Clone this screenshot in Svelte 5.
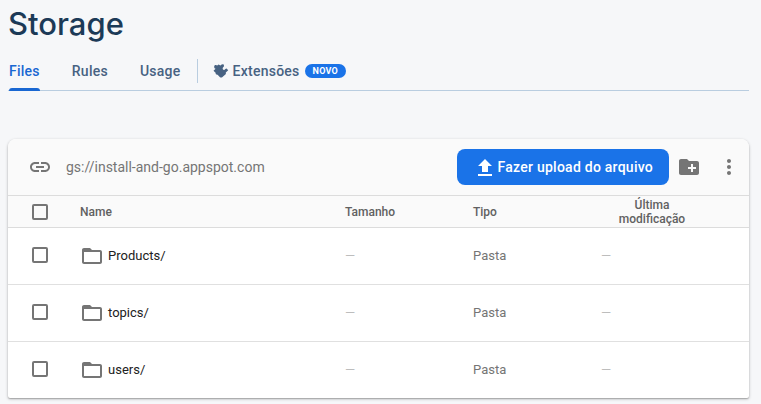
<script>
  const tabs = ['Files', 'Rules', 'Usage'];
  const folders = ['Products/', 'topics/', 'users/'];
  let active = $state('Files');
  let selected = $state([]);
  const toggleAll = (e) => {
    selected = e.currentTarget.checked ? [...folders] : [];
  };
</script>

<main>
  <h1>Storage</h1>

  <nav>
    {#each tabs as tab}
      <a href="#{tab.toLowerCase()}" class="tab" class:active={active === tab} onclick={() => (active = tab)}>{tab}</a>
    {/each}
    <span class="divider"></span>
    <a href="#extensions" class="tab ext">
      <svg width="16" height="16" viewBox="0 0 16 16" aria-hidden="true">
        <path fill="currentColor" d="M1.200 3.400C1.400 2 3.200 1.600 4.200 2.600L5.600 1.600 7.400 2.600 9 1.200 10.800 1.600 11 3.200 9.800 4.800C9.300 6 10 7 11.200 6.900 12.300 6.800 12.400 5.600 13.600 5.600L15.200 7.200 12.800 9.600 12.900 10.900 9.200 14.200C8.600 14.700 7.600 14.700 7 14.200L4.600 11.800C3.400 12 2.400 11 2.600 9.800L.500 7.800 2.600 5.800C1.600 5.400 1 4.500 1.200 3.400Z"/>
      </svg>
      <span>Extensões</span>
      <span class="badge">NOVO</span>
    </a>
  </nav>

  <section class="card">
    <header>
      <svg class="link" width="24" height="24" viewBox="0 0 24 24" aria-hidden="true">
        <path fill="currentColor" d="M3.900 12c0-1.710 1.390-3.100 3.100-3.100h4V7H7c-2.760 0-5 2.240-5 5s2.240 5 5 5h4v-1.900H7c-1.710 0-3.100-1.390-3.100-3.100zM8 13h8v-2H8v2zm9-6h-4v1.900h4c1.710 0 3.100 1.390 3.100 3.100s-1.390 3.100-3.100 3.100h-4V17h4c2.760 0 5-2.240 5-5s-2.240-5-5-5z"/>
      </svg>
      <span class="bucket">gs://install-and-go.appspot.com</span>
      <button class="upload">
        <svg width="24" height="24" viewBox="0 0 24 24" aria-hidden="true">
          <path fill="currentColor" d="M9 17h6v-6h4l-7-7-7 7h4zM5 19h14v2H5z"/>
        </svg>
        Fazer upload do arquivo
      </button>
      <button class="icon" aria-label="Criar pasta">
        <svg width="24" height="24" viewBox="0 0 24 24" aria-hidden="true">
          <path fill="currentColor" d="M20 6h-8l-2-2H4c-1.110 0-1.990.890-1.990 2L2 18c0 1.110.890 2 2 2h16c1.110 0 2-.890 2-2V8c0-1.110-.890-2-2-2zm-1 8h-3v3h-2v-3h-3v-2h3V9h2v3h3v2z"/>
        </svg>
      </button>
      <button class="icon" aria-label="Mais opções">
        <svg width="24" height="24" viewBox="0 0 24 24" aria-hidden="true">
          <path fill="currentColor" d="M12 8c1.100 0 2-.900 2-2s-.900-2-2-2-2 .900-2 2 .900 2 2 2zm0 2c-1.100 0-2 .900-2 2s.900 2 2 2 2-.900 2-2-.900-2-2-2zm0 6c-1.100 0-2 .900-2 2s.900 2 2 2 2-.900 2-2-.900-2-2-2z"/>
        </svg>
      </button>
    </header>

    <table>
      <colgroup>
        <col class="c-check" /><col /><col class="c-mid" /><col class="c-mid" /><col class="c-date" /><col class="c-end" />
      </colgroup>
      <thead>
        <tr>
          <th class="check"><input type="checkbox" aria-label="Selecionar tudo" checked={selected.length === folders.length} onchange={toggleAll} /></th>
          <th>Name</th>
          <th>Tamanho</th>
          <th>Tipo</th>
          <th class="date">Última modificação</th>
          <th></th>
        </tr>
      </thead>
      <tbody>
        {#each folders as folder}
          <tr>
            <td class="check"><input type="checkbox" aria-label={folder} value={folder} bind:group={selected} /></td>
            <td>
              <div class="name">
                <svg width="24" height="24" viewBox="0 0 24 24" aria-hidden="true">
                  <path fill="currentColor" d="M20 6h-8l-2-2H4c-1.100 0-1.990.900-1.990 2L2 18c0 1.100.900 2 2 2h16c1.100 0 2-.900 2-2V8c0-1.100-.900-2-2-2zm0 12H4V8h16v10z"/>
                </svg>
                <span>{folder}</span>
              </div>
            </td>
            <td class="empty">—</td>
            <td class="kind">Pasta</td>
            <td class="empty">—</td>
            <td></td>
          </tr>
        {/each}
      </tbody>
    </table>
  </section>
</main>

<style>
  :global(body) {
    background: #f6f7f9;
  }
  main {
    padding: 4px 12px 6px 8px;
    font-family: Roboto, sans-serif;
    font-size: 14px;
    color: #212121;
  }
  h1 {
    margin: 0;
    font: 500 31px/40px Inter, sans-serif;
    color: #1c3a57;
  }
  nav {
    display: flex;
    align-items: center;
    height: 46px;
    border-bottom: 1px solid #b9cde0;
  }
  .tab {
    position: relative;
    display: flex;
    align-items: center;
    height: 46px;
    margin-right: 31px;
    padding: 8px 0 0 1px;
    box-sizing: border-box;
    font-weight: 500;
    letter-spacing: 0.25px;
    color: #476282;
    text-decoration: none;
  }
  .tab.active {
    color: #1967d2;
  }
  .tab.active::after {
    content: '';
    position: absolute;
    left: 1px;
    right: 0;
    bottom: -1px;
    height: 3px;
    border-radius: 3px 3px 0 0;
    background: #1967d2;
  }
  .divider {
    width: 1px;
    height: 24px;
    margin: 8px 14px 0 -15px;
    background: #b9cde0;
  }
  .ext svg {
    margin-right: 4px;
  }
  .badge {
    margin-left: 5px;
    padding: 0 8px;
    border-radius: 8px;
    background: #1a73e8;
    color: #fff;
    font-size: 9px;
    font-weight: 700;
    line-height: 14px;
  }
  .card {
    margin-top: 48px;
    border-radius: 8px 8px 2px 2px;
    background: #fff;
    box-shadow: 0 1px 3px rgba(0, 0, 0, 0.3), 0 1px 1px rgba(0, 0, 0, 0.14);
    overflow: hidden;
  }
  header {
    display: flex;
    align-items: center;
    height: 56px;
    padding-left: 20px;
    background: #fafafa;
    border-bottom: 1px solid #dcdcdc;
    color: #757575;
  }
  .bucket {
    flex: 1;
    margin-left: 14px;
  }
  button {
    display: flex;
    align-items: center;
    border: 0;
    padding: 0;
    background: none;
    color: inherit;
    cursor: pointer;
  }
  .upload {
    gap: 1px;
    height: 36px;
    padding: 0 16px;
    border-radius: 8px;
    background: #1a73e8;
    color: #fff;
    font: 500 14px Roboto, sans-serif;
    letter-spacing: 0.25px;
  }
  .icon {
    justify-content: center;
    width: 40px;
    height: 40px;
  }
  table {
    width: 100%;
    table-layout: fixed;
    border-collapse: separate;
    border-spacing: 0;
  }
  .c-check { width: 64px; }
  .c-mid { width: 128px; }
  .c-date { width: 118px; }
  .c-end { width: 38px; }
  th,
  td {
    box-sizing: border-box;
    padding: 0 8px;
    text-align: left;
    vertical-align: middle;
  }
  th {
    height: 32px;
    background: #fafafa;
    border-bottom: 1px solid #dcdcdc;
    color: #616161;
    font-size: 12px;
    font-weight: 500;
    line-height: 14px;
  }
  .date {
    padding: 0 16px;
    text-align: center;
  }
  td {
    height: 57px;
    padding-bottom: 2px;
    border-bottom: 1px solid #e0e0e0;
    font-size: 13px;
  }
  tbody tr:last-child td {
    height: 56px;
    border-bottom: 0;
  }
  .check {
    padding-left: 24px;
  }
  input {
    display: block;
    appearance: none;
    box-sizing: border-box;
    width: 16px;
    height: 16px;
    margin: 0;
    border: 2px solid #757575;
    border-radius: 2px;
  }
  input:checked {
    border-color: #1a73e8;
    background: #1a73e8;
  }
  .name {
    display: flex;
    align-items: center;
    gap: 4px;
  }
  .name svg {
    margin-top: 2px;
    color: #757575;
  }
  .kind {
    color: #757575;
  }
  .empty {
    color: #bdbdbd;
  }
</style>
